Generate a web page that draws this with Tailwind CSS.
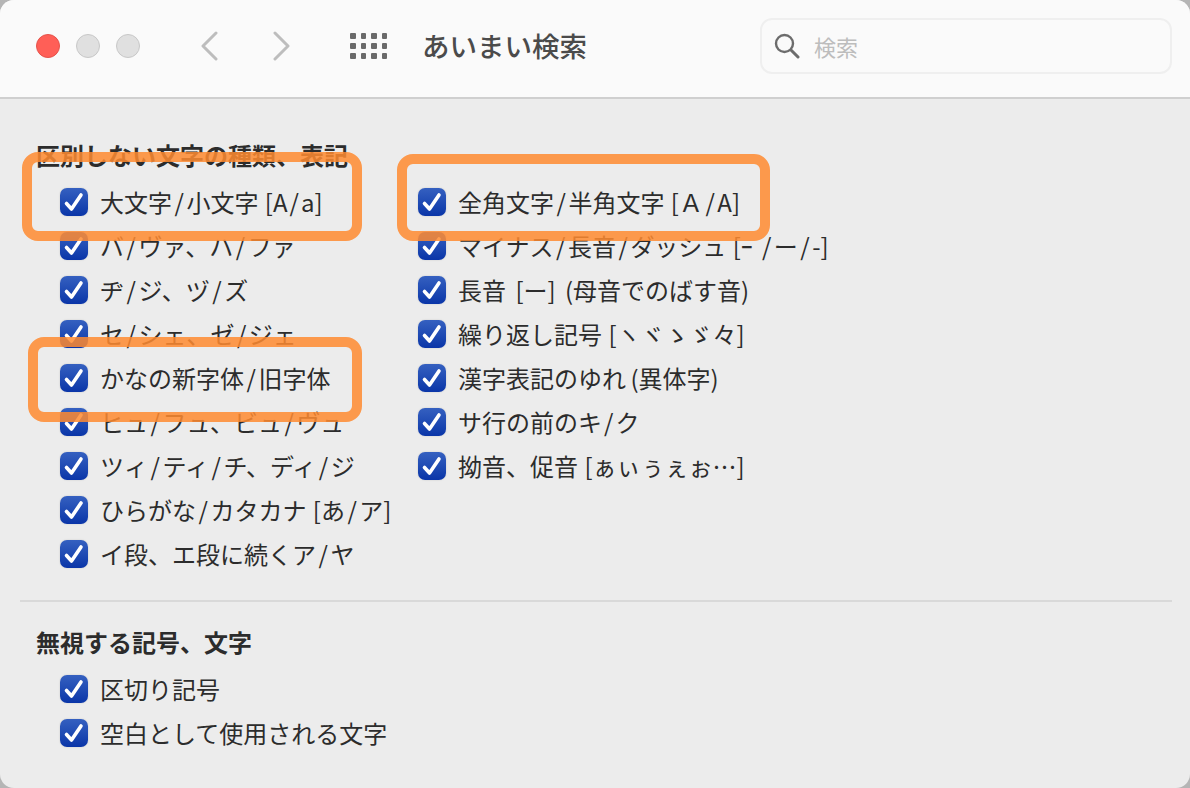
<!DOCTYPE html>
<html lang="ja">
<head>
<meta charset="utf-8">
<script src="https://cdn.jsdelivr.net/npm/@tailwindcss/browser@4"></script>
</head>
<body class="bg-[#b5b5b5]">
<div class="relative w-[1190px] h-[788px] overflow-hidden rounded-[14px] bg-[#ececec] text-[#2c2c2c] font-['Noto_Sans_CJK_JP',sans-serif]">
  <header class="h-[99px] bg-[#fafafa] border-b-2 border-[#cfcfcf] flex items-center relative">
    <div class="flex gap-4 ml-9 -mt-[5px]">
      <span class="w-6 h-6 rounded-full bg-[#ff5f57] border border-[#e5534b]"></span>
      <span class="w-6 h-6 rounded-full bg-[#e0e0e0] border border-[#c8c8c8]"></span>
      <span class="w-6 h-6 rounded-full bg-[#e0e0e0] border border-[#c8c8c8]"></span>
    </div>
    <svg class="ml-[60px] -mt-[5px]" width="18" height="30" viewBox="0 0 18 30" fill="none" stroke="#bdbdbd" stroke-width="3" stroke-linecap="round" stroke-linejoin="round"><path d="M16 2 3 15l13 13"/></svg>
    <svg class="ml-[55px] -mt-[5px]" width="18" height="30" viewBox="0 0 18 30" fill="none" stroke="#bdbdbd" stroke-width="3" stroke-linecap="round" stroke-linejoin="round"><path d="m2 2 13 13L2 28"/></svg>
    <div class="ml-[59px] -mt-[5px] grid grid-cols-4 gap-x-[5px] gap-y-[4px]">
      <span class="w-[5.5px] h-[6px] rounded-[1px] bg-[#6a6a6a]"></span><span class="w-[5.5px] h-[6px] rounded-[1px] bg-[#6a6a6a]"></span><span class="w-[5.5px] h-[6px] rounded-[1px] bg-[#6a6a6a]"></span><span class="w-[5.5px] h-[6px] rounded-[1px] bg-[#6a6a6a]"></span>
      <span class="w-[5.5px] h-[6px] rounded-[1px] bg-[#6a6a6a]"></span><span class="w-[5.5px] h-[6px] rounded-[1px] bg-[#6a6a6a]"></span><span class="w-[5.5px] h-[6px] rounded-[1px] bg-[#6a6a6a]"></span><span class="w-[5.5px] h-[6px] rounded-[1px] bg-[#6a6a6a]"></span>
      <span class="w-[5.5px] h-[6px] rounded-[1px] bg-[#6a6a6a]"></span><span class="w-[5.5px] h-[6px] rounded-[1px] bg-[#6a6a6a]"></span><span class="w-[5.5px] h-[6px] rounded-[1px] bg-[#6a6a6a]"></span><span class="w-[5.5px] h-[6px] rounded-[1px] bg-[#6a6a6a]"></span>
    </div>
    <h1 class="ml-[35px] -mt-[5px] text-[27.5px] leading-none font-medium text-[#4b4b4b] whitespace-nowrap">あいまい検索</h1>
    <div class="ml-auto mr-[18px] -mt-[5px] w-[412px] h-[56px] rounded-[12px] border-2 border-[#efefef] flex items-center pl-[12px]">
      <svg width="26" height="26" viewBox="0 0 26 26" fill="none" stroke="#6c6c6c" stroke-width="2.4" stroke-linecap="round"><circle cx="10.5" cy="10.5" r="8.5"/><path d="m17 17 7 7" stroke-width="3"/></svg>
      <span class="ml-[14px] text-[22px] leading-none text-[#bdbdbd]">検索</span>
    </div>
  </header>

  <main class="pl-[36px] pr-[18px]">
    <h2 class="mt-[41px] h-[30px] flex items-center text-[24px] leading-none font-bold text-[#2c2c2c]">区別しない文字の種類、表記</h2>
    <div class="grid grid-cols-[358px_1fr] pl-[24px] mt-[10px] text-[24px] leading-none [word-spacing:1px]">
      <div class="flex flex-col">
        <label class="h-[44px] flex items-center gap-3"><span class="w-7 h-7 shrink-0 rounded-[7px] bg-gradient-to-b from-[#3560c0] to-[#0a35a8] flex items-center justify-center shadow-[0_0_2px_rgba(0,0,0,0.15)]"><svg width="22" height="22" viewBox="0 0 22 22" fill="none" stroke="#fff" stroke-width="3.6" stroke-linecap="round" stroke-linejoin="round"><path d="M3.5 12.5 8.5 18 18 4"/></svg></span><span class="whitespace-nowrap">大文字<span class="px-[2.5px]">/</span>小文字 [A<span class="px-[2px]">/</span>a]</span></label>
        <label class="h-[44px] flex items-center gap-3"><span class="w-7 h-7 shrink-0 rounded-[7px] bg-gradient-to-b from-[#3560c0] to-[#0a35a8] flex items-center justify-center shadow-[0_0_2px_rgba(0,0,0,0.15)]"><svg width="22" height="22" viewBox="0 0 22 22" fill="none" stroke="#fff" stroke-width="3.6" stroke-linecap="round" stroke-linejoin="round"><path d="M3.5 12.5 8.5 18 18 4"/></svg></span><span class="whitespace-nowrap">バ<span class="px-[2.5px]">/</span>ヴァ、ハ<span class="px-[2.5px]">/</span>ファ</span></label>
        <label class="h-[44px] flex items-center gap-3"><span class="w-7 h-7 shrink-0 rounded-[7px] bg-gradient-to-b from-[#3560c0] to-[#0a35a8] flex items-center justify-center shadow-[0_0_2px_rgba(0,0,0,0.15)]"><svg width="22" height="22" viewBox="0 0 22 22" fill="none" stroke="#fff" stroke-width="3.6" stroke-linecap="round" stroke-linejoin="round"><path d="M3.5 12.5 8.5 18 18 4"/></svg></span><span class="whitespace-nowrap">ヂ<span class="px-[2.5px]">/</span>ジ、ヅ<span class="px-[2.5px]">/</span>ズ</span></label>
        <label class="h-[44px] flex items-center gap-3"><span class="w-7 h-7 shrink-0 rounded-[7px] bg-gradient-to-b from-[#3560c0] to-[#0a35a8] flex items-center justify-center shadow-[0_0_2px_rgba(0,0,0,0.15)]"><svg width="22" height="22" viewBox="0 0 22 22" fill="none" stroke="#fff" stroke-width="3.6" stroke-linecap="round" stroke-linejoin="round"><path d="M3.5 12.5 8.5 18 18 4"/></svg></span><span class="whitespace-nowrap">セ<span class="px-[2.5px]">/</span>シェ、ゼ<span class="px-[2.5px]">/</span>ジェ</span></label>
        <label class="h-[44px] flex items-center gap-3"><span class="w-7 h-7 shrink-0 rounded-[7px] bg-gradient-to-b from-[#3560c0] to-[#0a35a8] flex items-center justify-center shadow-[0_0_2px_rgba(0,0,0,0.15)]"><svg width="22" height="22" viewBox="0 0 22 22" fill="none" stroke="#fff" stroke-width="3.6" stroke-linecap="round" stroke-linejoin="round"><path d="M3.5 12.5 8.5 18 18 4"/></svg></span><span class="whitespace-nowrap">かなの新字体<span class="px-[2.5px]">/</span>旧字体</span></label>
        <label class="h-[44px] flex items-center gap-3"><span class="w-7 h-7 shrink-0 rounded-[7px] bg-gradient-to-b from-[#3560c0] to-[#0a35a8] flex items-center justify-center shadow-[0_0_2px_rgba(0,0,0,0.15)]"><svg width="22" height="22" viewBox="0 0 22 22" fill="none" stroke="#fff" stroke-width="3.6" stroke-linecap="round" stroke-linejoin="round"><path d="M3.5 12.5 8.5 18 18 4"/></svg></span><span class="whitespace-nowrap">ヒュ<span class="px-[2.5px]">/</span>フュ、ビュ<span class="px-[2.5px]">/</span>ヴュ</span></label>
        <label class="h-[44px] flex items-center gap-3"><span class="w-7 h-7 shrink-0 rounded-[7px] bg-gradient-to-b from-[#3560c0] to-[#0a35a8] flex items-center justify-center shadow-[0_0_2px_rgba(0,0,0,0.15)]"><svg width="22" height="22" viewBox="0 0 22 22" fill="none" stroke="#fff" stroke-width="3.6" stroke-linecap="round" stroke-linejoin="round"><path d="M3.5 12.5 8.5 18 18 4"/></svg></span><span class="whitespace-nowrap">ツィ<span class="px-[2.5px]">/</span>ティ<span class="px-[2.5px]">/</span>チ、ディ<span class="px-[2.5px]">/</span>ジ</span></label>
        <label class="h-[44px] flex items-center gap-3"><span class="w-7 h-7 shrink-0 rounded-[7px] bg-gradient-to-b from-[#3560c0] to-[#0a35a8] flex items-center justify-center shadow-[0_0_2px_rgba(0,0,0,0.15)]"><svg width="22" height="22" viewBox="0 0 22 22" fill="none" stroke="#fff" stroke-width="3.6" stroke-linecap="round" stroke-linejoin="round"><path d="M3.5 12.5 8.5 18 18 4"/></svg></span><span class="whitespace-nowrap">ひらがな<span class="px-[2.5px]">/</span>カタカナ [あ<span class="px-[2.5px]">/</span>ア]</span></label>
        <label class="h-[44px] flex items-center gap-3"><span class="w-7 h-7 shrink-0 rounded-[7px] bg-gradient-to-b from-[#3560c0] to-[#0a35a8] flex items-center justify-center shadow-[0_0_2px_rgba(0,0,0,0.15)]"><svg width="22" height="22" viewBox="0 0 22 22" fill="none" stroke="#fff" stroke-width="3.6" stroke-linecap="round" stroke-linejoin="round"><path d="M3.5 12.5 8.5 18 18 4"/></svg></span><span class="whitespace-nowrap">イ段、エ段に続くア<span class="px-[2.5px]">/</span>ヤ</span></label>
      </div>
      <div class="flex flex-col">
        <label class="h-[44px] flex items-center gap-3"><span class="w-7 h-7 shrink-0 rounded-[7px] bg-gradient-to-b from-[#3560c0] to-[#0a35a8] flex items-center justify-center shadow-[0_0_2px_rgba(0,0,0,0.15)]"><svg width="22" height="22" viewBox="0 0 22 22" fill="none" stroke="#fff" stroke-width="3.6" stroke-linecap="round" stroke-linejoin="round"><path d="M3.5 12.5 8.5 18 18 4"/></svg></span><span class="whitespace-nowrap">全角文字<span class="px-[2.5px]">/</span>半角文字 [Ａ<span class="px-[2.5px]">/</span>A]</span></label>
        <label class="h-[44px] flex items-center gap-3"><span class="w-7 h-7 shrink-0 rounded-[7px] bg-gradient-to-b from-[#3560c0] to-[#0a35a8] flex items-center justify-center shadow-[0_0_2px_rgba(0,0,0,0.15)]"><svg width="22" height="22" viewBox="0 0 22 22" fill="none" stroke="#fff" stroke-width="3.6" stroke-linecap="round" stroke-linejoin="round"><path d="M3.5 12.5 8.5 18 18 4"/></svg></span><span class="whitespace-nowrap">マイナス<span class="px-[2.5px]">/</span>長音<span class="px-[2.5px]">/</span>ダッシュ [ｰ<span class="pl-[9px] pr-[2.5px]">/</span>ー<span class="px-[2.5px]">/</span>-]</span></label>
        <label class="h-[44px] flex items-center gap-3"><span class="w-7 h-7 shrink-0 rounded-[7px] bg-gradient-to-b from-[#3560c0] to-[#0a35a8] flex items-center justify-center shadow-[0_0_2px_rgba(0,0,0,0.15)]"><svg width="22" height="22" viewBox="0 0 22 22" fill="none" stroke="#fff" stroke-width="3.6" stroke-linecap="round" stroke-linejoin="round"><path d="M3.5 12.5 8.5 18 18 4"/></svg></span><span class="whitespace-nowrap [word-spacing:4px]">長音 [ー] (母音でのばす音)</span></label>
        <label class="h-[44px] flex items-center gap-3"><span class="w-7 h-7 shrink-0 rounded-[7px] bg-gradient-to-b from-[#3560c0] to-[#0a35a8] flex items-center justify-center shadow-[0_0_2px_rgba(0,0,0,0.15)]"><svg width="22" height="22" viewBox="0 0 22 22" fill="none" stroke="#fff" stroke-width="3.6" stroke-linecap="round" stroke-linejoin="round"><path d="M3.5 12.5 8.5 18 18 4"/></svg></span><span class="whitespace-nowrap">繰り返し記号 [ヽヾゝゞ々]</span></label>
        <label class="h-[44px] flex items-center gap-3"><span class="w-7 h-7 shrink-0 rounded-[7px] bg-gradient-to-b from-[#3560c0] to-[#0a35a8] flex items-center justify-center shadow-[0_0_2px_rgba(0,0,0,0.15)]"><svg width="22" height="22" viewBox="0 0 22 22" fill="none" stroke="#fff" stroke-width="3.6" stroke-linecap="round" stroke-linejoin="round"><path d="M3.5 12.5 8.5 18 18 4"/></svg></span><span class="whitespace-nowrap [word-spacing:-1px]">漢字表記のゆれ (異体字)</span></label>
        <label class="h-[44px] flex items-center gap-3"><span class="w-7 h-7 shrink-0 rounded-[7px] bg-gradient-to-b from-[#3560c0] to-[#0a35a8] flex items-center justify-center shadow-[0_0_2px_rgba(0,0,0,0.15)]"><svg width="22" height="22" viewBox="0 0 22 22" fill="none" stroke="#fff" stroke-width="3.6" stroke-linecap="round" stroke-linejoin="round"><path d="M3.5 12.5 8.5 18 18 4"/></svg></span><span class="whitespace-nowrap">サ行の前のキ<span class="px-[2px]">/</span>ク</span></label>
        <label class="h-[44px] flex items-center gap-3"><span class="w-7 h-7 shrink-0 rounded-[7px] bg-gradient-to-b from-[#3560c0] to-[#0a35a8] flex items-center justify-center shadow-[0_0_2px_rgba(0,0,0,0.15)]"><svg width="22" height="22" viewBox="0 0 22 22" fill="none" stroke="#fff" stroke-width="3.6" stroke-linecap="round" stroke-linejoin="round"><path d="M3.5 12.5 8.5 18 18 4"/></svg></span><span class="whitespace-nowrap">拗音、促音 [ぁぃぅぇぉ…]</span></label>
      </div>
    </div>
    <hr class="-ml-[16px] mt-[24px] border-t-2 border-[#d9d9d9]">
    <h2 class="mt-[25px] h-[30px] flex items-center text-[24px] leading-none font-bold">無視する記号、文字</h2>
    <div class="pl-[24px] mt-[10px] flex flex-col text-[24px] leading-none">
      <label class="h-[44px] flex items-center gap-3"><span class="w-7 h-7 shrink-0 rounded-[7px] bg-gradient-to-b from-[#3560c0] to-[#0a35a8] flex items-center justify-center shadow-[0_0_2px_rgba(0,0,0,0.15)]"><svg width="22" height="22" viewBox="0 0 22 22" fill="none" stroke="#fff" stroke-width="3.6" stroke-linecap="round" stroke-linejoin="round"><path d="M3.5 12.5 8.5 18 18 4"/></svg></span><span class="whitespace-nowrap">区切り記号</span></label>
      <label class="h-[44px] flex items-center gap-3"><span class="w-7 h-7 shrink-0 rounded-[7px] bg-gradient-to-b from-[#3560c0] to-[#0a35a8] flex items-center justify-center shadow-[0_0_2px_rgba(0,0,0,0.15)]"><svg width="22" height="22" viewBox="0 0 22 22" fill="none" stroke="#fff" stroke-width="3.6" stroke-linecap="round" stroke-linejoin="round"><path d="M3.5 12.5 8.5 18 18 4"/></svg></span><span class="whitespace-nowrap">空白として使用される文字</span></label>
    </div>
  </main>

  <div class="absolute left-[22px] top-[152px] w-[340px] h-[89px] rounded-[16px] border-[10px] border-[#ff8a30]/85"></div>
  <div class="absolute left-[397px] top-[154px] w-[373px] h-[87px] rounded-[16px] border-[10px] border-[#ff8a30]/85"></div>
  <div class="absolute left-[28px] top-[337px] w-[334px] h-[85px] rounded-[16px] border-[10px] border-[#ff8a30]/85"></div>
</div>
</body>
</html>
